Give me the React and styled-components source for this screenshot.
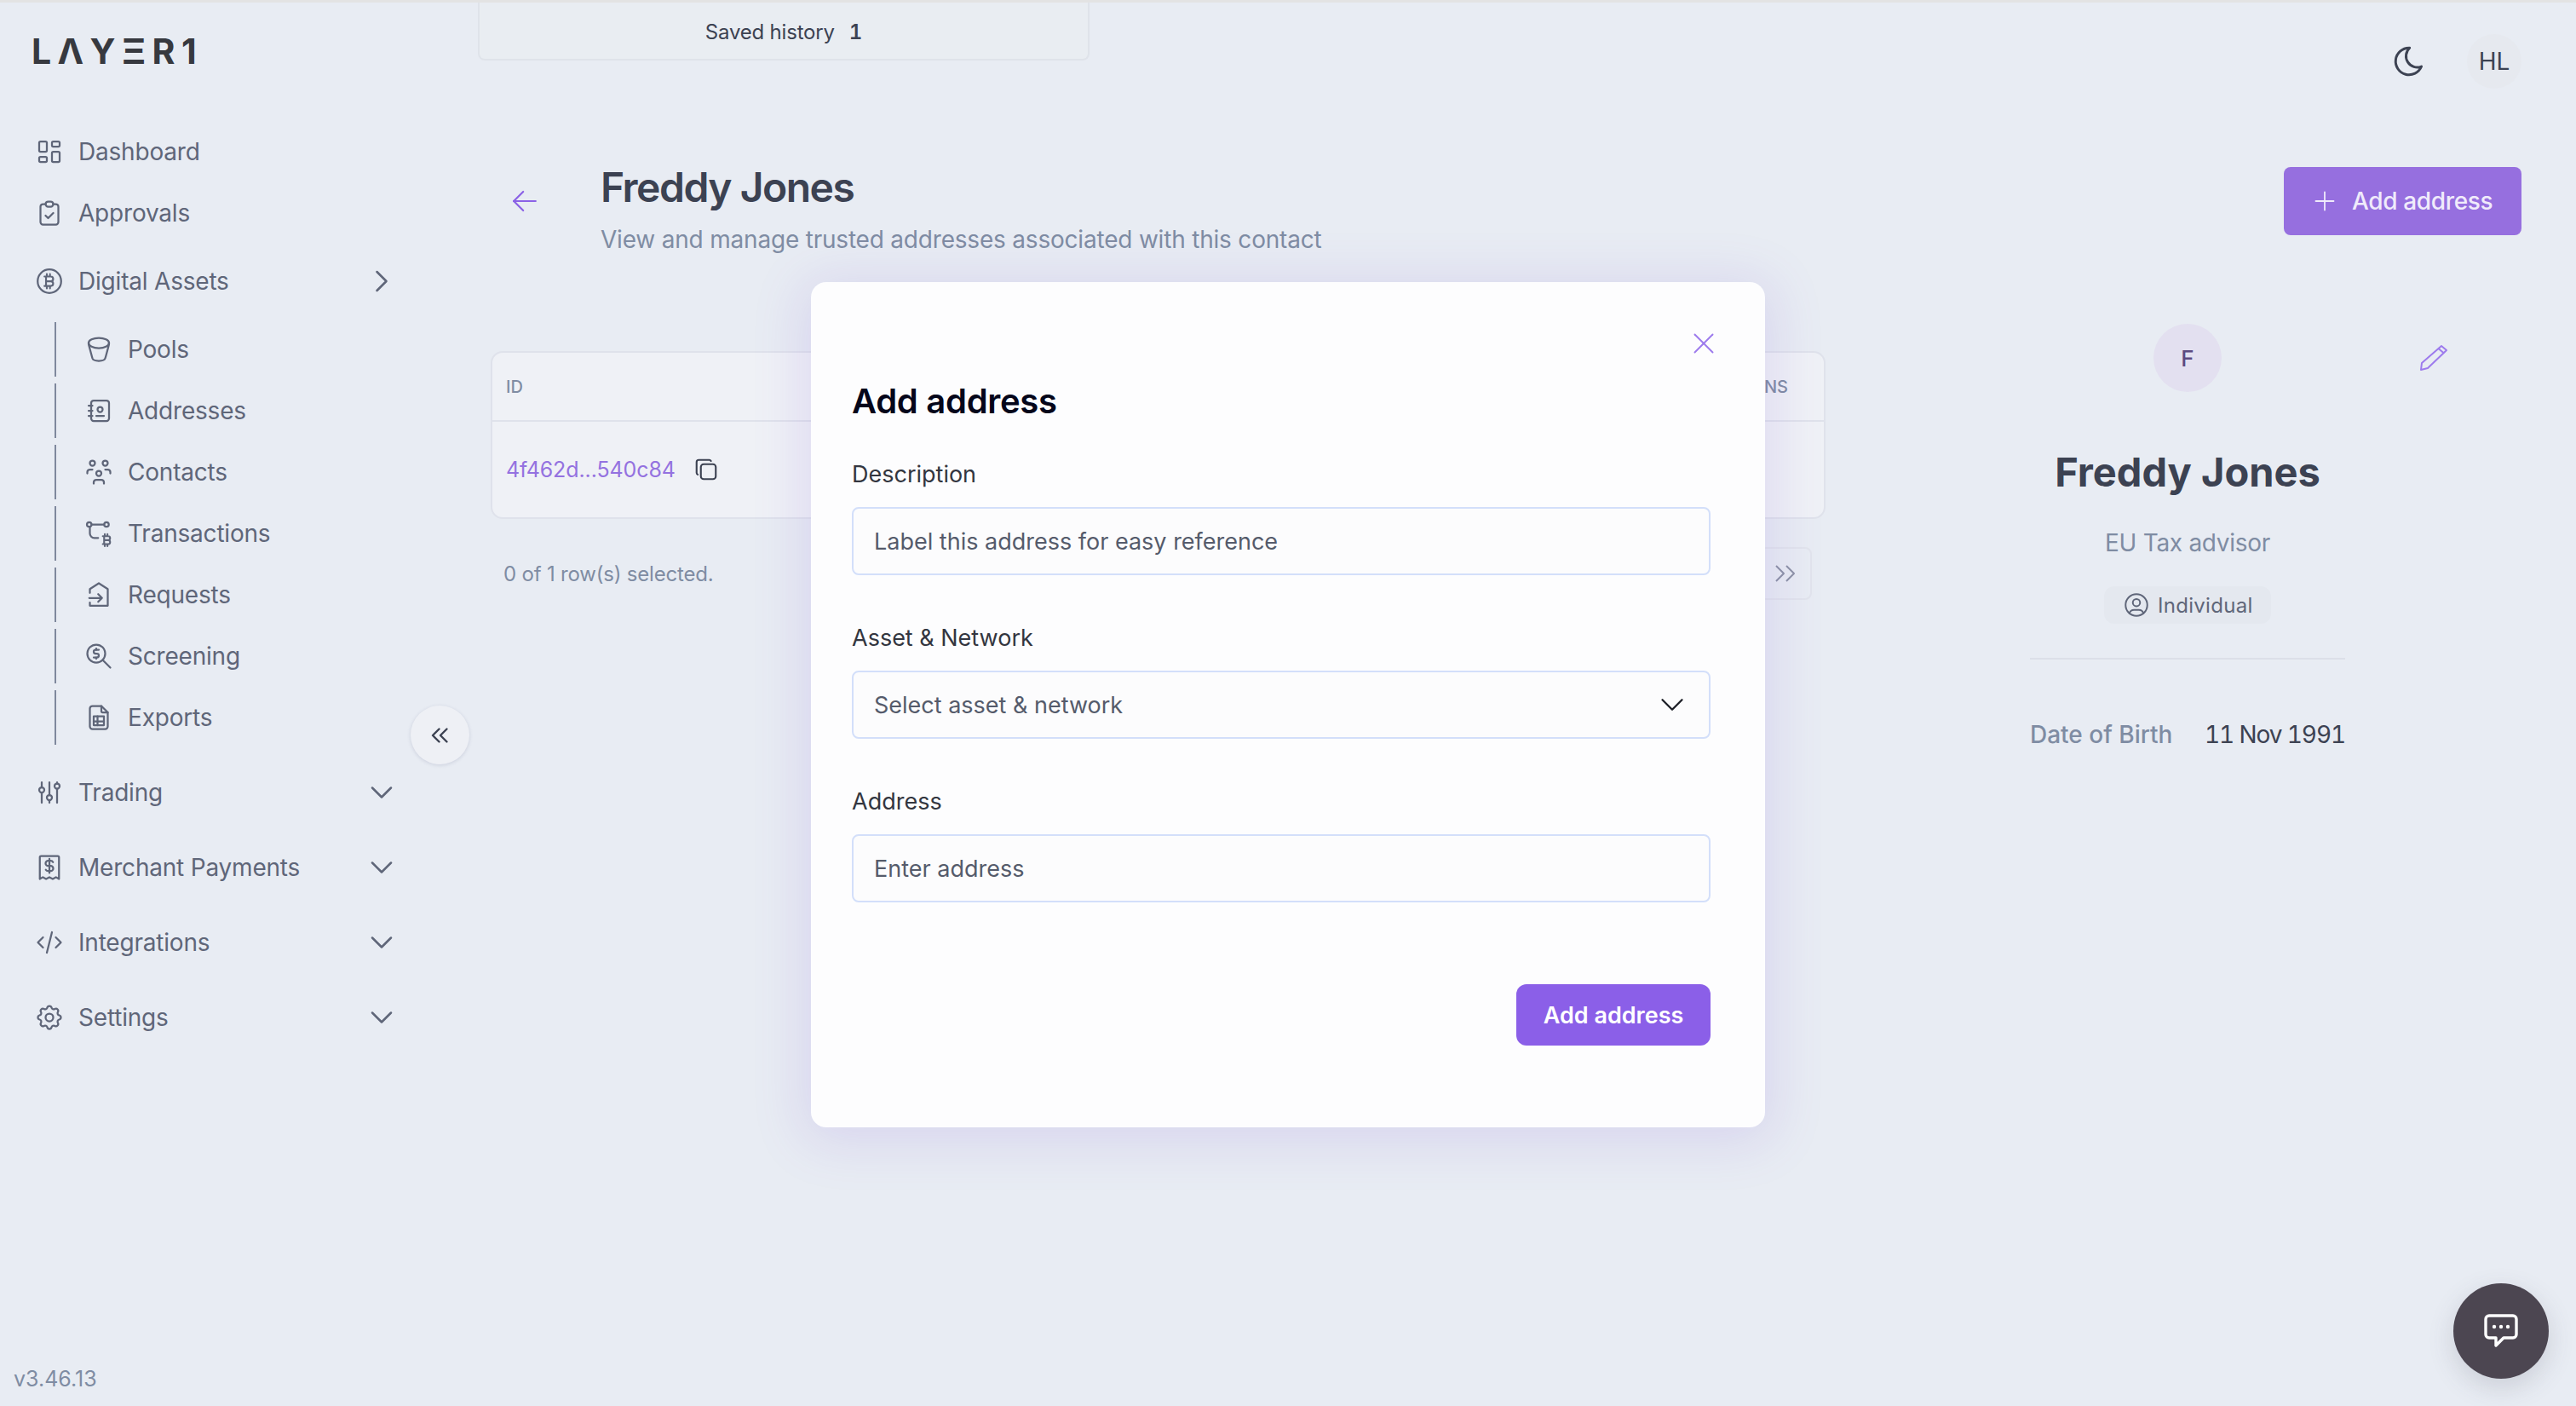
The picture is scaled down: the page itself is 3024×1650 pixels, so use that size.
import React from 'react';
import styled, { createGlobalStyle } from 'styled-components';
import {
  TbLayoutDashboard, TbClipboardCheck, TbBucket, TbAddressBook, TbUsersGroup, TbZoomMoney,
  TbFileSpreadsheet, TbAdjustments, TbCode, TbSettings, TbChevronRight, TbChevronDown,
  TbChevronsLeft, TbMoon, TbPlus, TbArrowLeft, TbX, TbCopy, TbUserCircle,
} from 'react-icons/tb';

const GlobalStyle = createGlobalStyle`
  html, body {
    margin: 0;
    padding: 0;
    background: #e8ecf3;
  }
  body {
    font-family: Inter, "Liberation Sans", sans-serif;
    overflow: hidden;
  }
  * {
    box-sizing: border-box;
  }
`;

const Page = styled.div`
  position: relative;
  display: flex;
  width: 3024px;
  height: 1650px;
  background: #e8ecf3;
  border-top: 3px solid #e3e3e3;
  overflow: hidden;
`;

/* sidebar */
const Sidebar = styled.aside`
  position: relative;
  display: flex;
  flex-direction: column;
  flex: 0 0 560px;
`;

const Logo = styled.div`
  margin: 32px 0 0 37px;
  height: 50px;
  font-size: 41px;
  line-height: 50px;
  font-weight: 700;
  letter-spacing: 7.4px;
  color: #37393f;
`;

const Nav = styled.nav`
  display: flex;
  flex-direction: column;
  margin-top: 61px;
`;

const NavItem = styled.div`
  display: flex;
  align-items: center;
  gap: 16px;
  height: 64px;
  margin-top: ${p => p.$gap || 0}px;
  padding-left: 40px;
  font-size: 28px;
  letter-spacing: -0.2px;
  color: #5f6679;
  svg {
    flex: none;
  }
`;

const NavLabel = styled.span`
  flex: 1;
`;

const Caret = styled.span`
  display: flex;
  width: 44px;
  margin-right: 90px;
  justify-content: center;
  color: #5f6679;
`;

const SubList = styled.div`
  display: flex;
  flex-direction: column;
  gap: 8px;
  margin: 16px 0 0 64px;
`;

const SubItem = styled.div`
  display: flex;
  align-items: center;
  gap: 16px;
  height: 64px;
  padding-left: 32px;
  border-left: 2px solid #7f889d;
  font-size: 28px;
  letter-spacing: -0.2px;
  color: #5f6679;
`;

const CollapseButton = styled.button`
  position: absolute;
  left: 482px;
  top: 825px;
  display: flex;
  align-items: center;
  justify-content: center;
  width: 69px;
  height: 69px;
  padding: 0;
  border: 0;
  border-radius: 50%;
  background: #eef0f5;
  box-shadow: 0 1px 4px rgba(70, 80, 120, 0.18);
  color: #3c4252;
`;

const Version = styled.div`
  margin-top: auto;
  padding: 0 0 16px 16px;
  font-size: 25px;
  line-height: 32px;
  color: #7f8ca3;
`;

/* main column */
const Main = styled.main`
  flex: 1;
  display: flex;
  flex-direction: column;
  min-width: 0;
  padding-right: 64px;
`;

const TopBar = styled.div`
  display: flex;
  align-items: flex-start;
  justify-content: space-between;
  height: 101px;
`;

const SavedTab = styled.div`
  display: flex;
  align-items: center;
  justify-content: center;
  gap: 17px;
  width: 718px;
  height: 68px;
  margin-left: 1px;
  padding-top: 2px;
  background: #e9edf2;
  border: 2px solid #dfe3ea;
  border-top: 0;
  border-radius: 0 0 8px 8px;
  font-size: 24px;
  letter-spacing: -0.2px;
  color: #3c4252;
`;

const SavedCount = styled.span`
  font-weight: 600;
  font-variant-numeric: tabular-nums;
`;

const UserTools = styled.div`
  display: flex;
  align-items: center;
  gap: 47px;
  margin-top: 37px;
  color: #3c4252;
`;

const UserBadge = styled.div`
  display: flex;
  align-items: center;
  justify-content: center;
  width: 64px;
  height: 64px;
  border-radius: 50%;
  background: #e6e9ef;
  font-size: 28px;
`;

const HeaderRow = styled.header`
  display: flex;
  align-items: flex-start;
  margin-top: 87px;
  padding-left: 34px;
`;

const BackIcon = styled.span`
  display: flex;
  margin-top: 23px;
  color: #8b62e6;
`;

const Heading = styled.div`
  flex: 1;
  margin-left: 67px;
`;

const Title = styled.h1`
  margin: 0;
  font-size: 48px;
  line-height: 58px;
  font-weight: 600;
  letter-spacing: -1.5px;
  color: #3c4252;
`;

const Subtitle = styled.p`
  margin: 12px 0 0;
  font-size: 28px;
  line-height: 40px;
  letter-spacing: -0.2px;
  color: #7f8ca3;
`;

const AddButton = styled.button`
  display: flex;
  align-items: center;
  gap: 14px;
  width: 279px;
  height: 80px;
  margin-top: 5px;
  padding: 0 0 0 30px;
  border: 0;
  border-radius: 8px;
  background: #966fdf;
  font-family: inherit;
  font-size: 28px;
  font-weight: 500;
  letter-spacing: -0.35px;
  color: #f0ebfb;
`;

const ContentRow = styled.div`
  display: flex;
  align-items: flex-start;
  margin-top: 79px;
`;

const TableColumn = styled.section`
  flex: 0 0 1567px;
  margin: 32px 0 0 16px;
`;

const Table = styled.div`
  background: #eff1f6;
  border: 2px solid #dfe2eb;
  border-radius: 14px;
  overflow: hidden;
`;

const TableHead = styled.div`
  display: flex;
  align-items: center;
  justify-content: space-between;
  height: 81px;
  padding: 0 42px 0 16px;
  border-bottom: 2px solid #dfe2eb;
  font-size: 20px;
  font-weight: 500;
  color: #7f8ca3;
`;

const TableRow = styled.div`
  display: flex;
  align-items: center;
  gap: 21px;
  height: 112px;
  padding-left: 16px;
`;

const IdLink = styled.span`
  font-size: 25px;
  letter-spacing: -0.1px;
  color: #9472e0;
`;

const CopyIcon = styled.span`
  display: flex;
  color: #3c4252;
`;

const TableFooter = styled.div`
  display: flex;
  align-items: center;
  justify-content: space-between;
  height: 62px;
  margin-top: 33px;
  padding: 0 16px 0 15px;
  font-size: 24px;
  letter-spacing: -0.2px;
  color: #7f8ca3;
`;

const PageButton = styled.span`
  display: flex;
  align-items: center;
  justify-content: center;
  width: 62px;
  height: 62px;
  border: 2px solid #e1e4ec;
  border-radius: 8px;
  color: #8d93a6;
`;

/* contact card */
const Profile = styled.section`
  flex: 0 0 370px;
  min-width: 0;
  margin-left: 240px;
  display: flex;
  flex-direction: column;
  align-items: center;
`;

const AvatarRow = styled.div`
  display: grid;
  grid-template-columns: 145px 80px minmax(0, 1fr);
  align-items: center;
  width: 100%;
`;

const Avatar = styled.div`
  grid-column: 2;
  display: flex;
  align-items: center;
  justify-content: center;
  width: 80px;
  height: 80px;
  border-radius: 50%;
  background: #e3e0f0;
  font-size: 26px;
  font-weight: 500;
  color: #5c4a80;
`;

const PencilIcon = styled.svg`
  margin-left: 232px;
  width: 34px;
  height: 32px;
  fill: none;
  stroke: #9d7bed;
  stroke-width: 2;
  stroke-linejoin: round;
`;

const ProfileName = styled.h2`
  margin: 64px 0 0;
  font-size: 47px;
  line-height: 60px;
  font-weight: 700;
  color: #3c4252;
  white-space: nowrap;
`;

const ProfileRole = styled.div`
  margin-top: 33px;
  font-size: 28px;
  line-height: 40px;
  letter-spacing: -0.3px;
  color: #7f8ca3;
`;

const TypeBadge = styled.div`
  display: flex;
  align-items: center;
  gap: 8px;
  width: 196px;
  height: 44px;
  margin-top: 31px;
  padding-left: 21px;
  border-radius: 12px;
  background: #e4e8ef;
  font-size: 24px;
  letter-spacing: 0.3px;
  color: #5f6679;
`;

const Divider = styled.hr`
  width: 100%;
  height: 2px;
  margin: 40px 0 0;
  border: 0;
  background: #dcdfe8;
`;

const DetailRow = styled.div`
  display: flex;
  justify-content: space-between;
  width: 100%;
  margin-top: 68px;
  font-size: 28px;
  line-height: 40px;
`;

const DetailLabel = styled.span`
  font-weight: 500;
  color: #7f8ca3;
`;

const DetailValue = styled.span`
  font-variant-numeric: tabular-nums;
  letter-spacing: -1.1px;
  color: #3c4252;
`;

/* modal */
const Overlay = styled.div`
  position: absolute;
  inset: 0;
  display: flex;
  align-items: center;
  justify-content: center;
  padding-top: 1px;
`;

const Modal = styled.div`
  position: relative;
  display: flex;
  flex-direction: column;
  width: 1120px;
  height: 992px;
  padding: 116px 64px 0 48px;
  background: #fdfdfe;
  border-radius: 18px;
  box-shadow: 0 8px 60px 10px rgba(125, 85, 215, 0.15);
`;

const CloseButton = styled.button`
  position: absolute;
  top: 51px;
  right: 51px;
  display: flex;
  padding: 0;
  border: 0;
  background: none;
  color: #9d7bed;
`;

const ModalTitle = styled.h3`
  margin: 0;
  font-size: 40px;
  line-height: 48px;
  font-weight: 600;
  letter-spacing: -0.3px;
  color: #05061a;
`;

const Field = styled.div`
  margin-top: ${p => p.$first ? 40 : 52}px;
`;

const Label = styled.label`
  display: block;
  font-size: 27px;
  line-height: 44px;
  color: #333640;
`;

const Control = styled.div`
  display: flex;
  align-items: center;
  justify-content: space-between;
  height: 80px;
  margin-top: 16px;
  padding: 0 20px 0 24px;
  background: #fcfcfd;
  border: 2px solid #d3dffa;
  border-radius: 8px;
  font-size: 27px;
  color: #555b6b;
`;

const SubmitButton = styled.button`
  align-self: flex-end;
  width: 228px;
  height: 72px;
  margin-top: 96px;
  padding: 0;
  border: 0;
  border-radius: 12px;
  background: #8b5fe8;
  font-family: inherit;
  font-size: 27px;
  font-weight: 600;
  color: #ffffff;
`;

const ChatButton = styled.button`
  position: absolute;
  right: 32px;
  bottom: 32px;
  display: flex;
  align-items: center;
  justify-content: center;
  width: 112px;
  height: 112px;
  padding: 0;
  border: 0;
  border-radius: 50%;
  background: #4c4651;
  box-shadow: 0 10px 30px rgba(70, 70, 90, 0.18);
`;

const ICON = { size: 36, strokeWidth: 1.5 };

const DrawnIcon = ({ children }) => (
  <svg width="36" height="36" viewBox="0 0 24 24" fill="none" stroke="currentColor" strokeWidth="1.5" strokeLinecap="round" strokeLinejoin="round">
    {children}
  </svg>
);

const BitcoinIcon = () => (
  <DrawnIcon>
    <circle cx="12" cy="12" r="9.2" />
    <g transform="translate(4.4 4.6) scale(0.62)" strokeWidth="2.3">
      <path d="M6 6h8a3 3 0 0 1 0 6a3 3 0 0 1 0 6h-8M8 6v12M8 12h6M9 3v3M13 3v3M9 18v3M13 18v3" />
    </g>
  </DrawnIcon>
);

const TransactionsIcon = () => (
  <DrawnIcon>
    <circle cx="4.5" cy="5" r="1.8" />
    <circle cx="18" cy="5" r="1.8" />
    <path d="M6.3 5h9.9M5 7v5a3.5 3.5 0 0 0 3.5 3.5h3" />
    <g transform="translate(12 11) scale(0.52)" strokeWidth="2.7">
      <path d="M6 6h8a3 3 0 0 1 0 6a3 3 0 0 1 0 6h-8M8 6v12M8 12h6M9 3v3M13 3v3M9 18v3M13 18v3" />
    </g>
  </DrawnIcon>
);

const RequestsIcon = () => (
  <DrawnIcon>
    <path d="M5 10.5V7.5L12 3l7 4.5V20.5H5v-2.5" />
    <path d="M4.5 14.5h10M11.5 11.5l3 3l-3 3" />
  </DrawnIcon>
);

const ReceiptIcon = () => (
  <DrawnIcon>
    <path d="M5.5 3h13a1 1 0 0 1 1 1v17l-2.4-1.4l-2.5 1.4l-2.6-1.4l-2.6 1.4l-2.5-1.4L4.5 21V4a1 1 0 0 1 1-1" />
    <path d="M14.8 7.8a2 2 0 0 0-1.8-1h-2a2 2 0 0 0 0 4h2a2 2 0 0 1 0 4h-2a2 2 0 0 1-1.8-1M12 5.3v11" />
  </DrawnIcon>
);

const ChatIcon = () => (
  <svg width="40" height="40" viewBox="0 0 40 40" fill="none" stroke="#ffffff" strokeWidth="3.4" strokeLinejoin="round" strokeLinecap="round">
    <path d="M6 2h28a4 4 0 0 1 4 4v18a4 4 0 0 1-4 4H23l-9 9v-9H6a4 4 0 0 1-4-4V6a4 4 0 0 1 4-4z" />
    <g fill="#ffffff" stroke="none">
      <circle cx="12" cy="15" r="2.2" />
      <circle cx="20" cy="15" r="2.2" />
      <circle cx="28" cy="15" r="2.2" />
    </g>
  </svg>
);

const NextIcon = () => (
  <svg width="26" height="22" viewBox="0 0 26 22" fill="none" stroke="currentColor" strokeWidth="2" strokeLinejoin="round">
    <path d="M2 2l9 9l-9 9M14 2l9 9l-9 9" />
  </svg>
);

const subItems = [
  ['Pools', <TbBucket {...ICON} />],
  ['Addresses', <TbAddressBook {...ICON} />],
  ['Contacts', <TbUsersGroup {...ICON} />],
  ['Transactions', <TransactionsIcon />],
  ['Requests', <RequestsIcon />],
  ['Screening', <TbZoomMoney {...ICON} />],
  ['Exports', <TbFileSpreadsheet {...ICON} />],
];

const lowerItems = [
  ['Trading', <TbAdjustments {...ICON} />, 24],
  ['Merchant Payments', <ReceiptIcon />, 24],
  ['Integrations', <TbCode {...ICON} />, 24],
  ['Settings', <TbSettings {...ICON} />, 24],
];

const App = () => {
  return (
    <Page>
      <GlobalStyle />
      <Sidebar>
        <Logo>LΛYΞR1</Logo>
        <Nav>
          <NavItem><TbLayoutDashboard {...ICON} /><NavLabel>Dashboard</NavLabel></NavItem>
          <NavItem $gap={8}><TbClipboardCheck {...ICON} /><NavLabel>Approvals</NavLabel></NavItem>
          <NavItem $gap={16}>
            <BitcoinIcon />
            <NavLabel>Digital Assets</NavLabel>
            <Caret><TbChevronRight size={44} strokeWidth={1.4} /></Caret>
          </NavItem>
          <SubList>
            {subItems.map(([label, icon]) => (
              <SubItem key={label}>{icon}{label}</SubItem>
            ))}
          </SubList>
          {lowerItems.map(([label, icon, gap]) => (
            <NavItem key={label} $gap={gap}>
              {icon}
              <NavLabel>{label}</NavLabel>
              <Caret><TbChevronDown size={44} strokeWidth={1.4} /></Caret>
            </NavItem>
          ))}
        </Nav>
        <CollapseButton><TbChevronsLeft size={36} strokeWidth={1.6} /></CollapseButton>
        <Version>v3.46.13</Version>
      </Sidebar>

      <Main>
        <TopBar>
          <SavedTab>Saved history <SavedCount>1</SavedCount></SavedTab>
          <UserTools>
            <TbMoon size={42} strokeWidth={1.7} />
            <UserBadge>HL</UserBadge>
          </UserTools>
        </TopBar>

        <HeaderRow>
          <BackIcon><TbArrowLeft size={44} strokeWidth={1.2} /></BackIcon>
          <Heading>
            <Title>Freddy Jones</Title>
            <Subtitle>View and manage trusted addresses associated with this contact</Subtitle>
          </Heading>
          <AddButton><TbPlus size={36} strokeWidth={1.2} />Add address</AddButton>
        </HeaderRow>

        <ContentRow>
          <TableColumn>
            <Table>
              <TableHead><span>ID</span><span>ACTIONS</span></TableHead>
              <TableRow>
                <IdLink>4f462d...540c84</IdLink>
                <CopyIcon><TbCopy size={30} strokeWidth={1.7} /></CopyIcon>
              </TableRow>
            </Table>
            <TableFooter>
              <span>0 of 1 row(s) selected.</span>
              <PageButton><NextIcon /></PageButton>
            </TableFooter>
          </TableColumn>

          <Profile>
            <AvatarRow>
              <Avatar>F</Avatar>
              <PencilIcon viewBox="0 0 34 32">
                <path d="M2 30L3 22L26 2L32 7L10 28Z" />
                <path d="M22.5 5L29 10.5" />
              </PencilIcon>
            </AvatarRow>
            <ProfileName>Freddy Jones</ProfileName>
            <ProfileRole>EU Tax advisor</ProfileRole>
            <TypeBadge><TbUserCircle size={34} strokeWidth={1.4} />Individual</TypeBadge>
            <Divider />
            <DetailRow>
              <DetailLabel>Date of Birth</DetailLabel>
              <DetailValue>11 Nov 1991</DetailValue>
            </DetailRow>
          </Profile>
        </ContentRow>
      </Main>

      <Overlay>
        <Modal>
          <CloseButton><TbX size={42} strokeWidth={1.1} /></CloseButton>
          <ModalTitle>Add address</ModalTitle>
          <Field $first>
            <Label>Description</Label>
            <Control>Label this address for easy reference</Control>
          </Field>
          <Field>
            <Label>Asset &amp; Network</Label>
            <Control>Select asset &amp; network<TbChevronDown size={46} strokeWidth={1.2} color="#1d1f27" /></Control>
          </Field>
          <Field>
            <Label>Address</Label>
            <Control>Enter address</Control>
          </Field>
          <SubmitButton>Add address</SubmitButton>
        </Modal>
      </Overlay>

      <ChatButton><ChatIcon /></ChatButton>
    </Page>
  );
};

export default App;
